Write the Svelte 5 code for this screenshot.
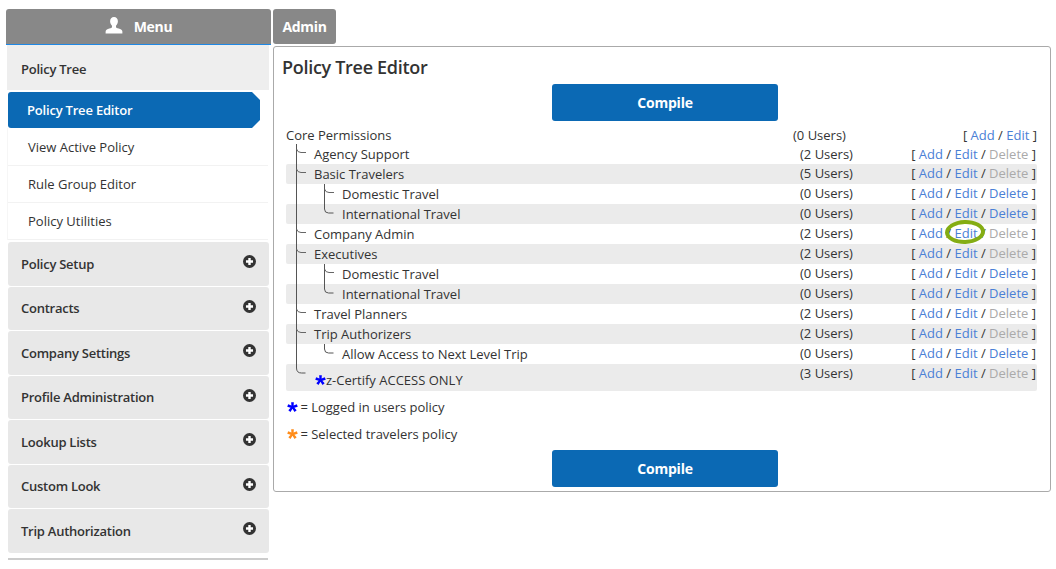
<script lang="ts">
	type Row = {
		name: string;
		users: number;
		depth: number;
		canDelete?: boolean;
		star?: boolean;
		tall?: boolean;
	};

	const subItems = ['View Active Policy', 'Rule Group Editor', 'Policy Utilities'];
	const sections = [
		'Policy Setup',
		'Contracts',
		'Company Settings',
		'Profile Administration',
		'Lookup Lists',
		'Custom Look',
		'Trip Authorization'
	];

	const rows: Row[] = [
		{ name: 'Agency Support', users: 2, depth: 1 },
		{ name: 'Basic Travelers', users: 5, depth: 1 },
		{ name: 'Domestic Travel', users: 0, depth: 2, canDelete: true },
		{ name: 'International Travel', users: 0, depth: 2, canDelete: true },
		{ name: 'Company Admin', users: 2, depth: 1 },
		{ name: 'Executives', users: 2, depth: 1 },
		{ name: 'Domestic Travel', users: 0, depth: 2, canDelete: true },
		{ name: 'International Travel', users: 0, depth: 2, canDelete: true },
		{ name: 'Travel Planners', users: 2, depth: 1 },
		{ name: 'Trip Authorizers', users: 2, depth: 1 },
		{ name: 'Allow Access to Next Level Trip', users: 0, depth: 2, canDelete: true },
		{ name: 'z-Certify ACCESS ONLY', users: 3, depth: 1, star: true, tall: true }
	];

	// y of each elbow in the tree, relative to the top of the tree
	const level1 = [28, 48, 108, 128, 188, 208];
	const level2 = [68, 148];
</script>

{#snippet star(color: string)}
	<svg class="star" width="11" height="11" viewBox="0 0 14 14" aria-hidden="true">
		<path
			d="M5.300 0.300h3.400l-.3 4.300 4.100-1.600 1.200 3.200-4.300 1 2.900 3.400-2.700 2L7 8.700l-2.600 3.900-2.700-2 2.900-3.400-4.300-1L1.500 3l4.100 1.600z"
			fill={color}
		/>
	</svg>
{/snippet}

<div class="page">
	<aside class="sidebar">
		<div class="menu-head">
			<svg width="18" height="17" viewBox="0 0 18 17" aria-hidden="true">
				<path
					d="M9 0c2.400 0 3.900 1.900 3.900 4.300 0 1.900-.8 3.400-1.900 4.400v1.200c0 .7 1.100 1.100 2.700 1.700 1.900.7 3.300 1.300 3.600 2.400.1.600.1 1.700.1 2.500H.6c0-.8 0-1.900.1-2.500.3-1.100 1.700-1.700 3.600-2.400C5.900 11 7 10.600 7 9.900V8.700C5.900 7.700 5.100 6.200 5.100 4.300 5.100 1.900 6.600 0 9 0z"
					fill="#fff"
				/>
			</svg>
			<span>Menu</span>
		</div>

		<div class="open-section">Policy Tree</div>
		<div class="active-item">Policy Tree Editor</div>
		<ul class="sub-list">
			{#each subItems as item}
				<li>{item}</li>
			{/each}
		</ul>

		{#each sections as section}
			<div class="section">
				<span>{section}</span>
				<svg width="13" height="13" viewBox="0 0 14 14" aria-hidden="true">
					<circle cx="7" cy="7" r="7" fill="#333" />
					<path d="M7 3.200v7.600M3.200 7h7.600" stroke="#fff" stroke-width="2.600" />
				</svg>
			</div>
		{/each}
		<div class="sidebar-end"></div>
	</aside>

	<main class="content">
		<div class="tab">Admin</div>
		<section class="panel">
			<h1>Policy Tree Editor</h1>
			<button class="compile top">Compile</button>

			<div class="tree">
				<svg class="tree-lines" width="60" height="260" viewBox="0 0 60 260" aria-hidden="true">
					<g fill="none" stroke="#555" stroke-width="1">
						<path d="M10.500 19V243q0 5 5 5h4" />
						{#each level1 as y}
							<path d="M10.500 {y - 4}q1 3.500 4.500 3.500h5" stroke="#666" />
						{/each}
						<path d="M38.500 59V84q0 4 4 4h5" />
						<path d="M38.500 139V164q0 4 4 4h5" />
						<path d="M38.500 219V224q0 4 4 4h5" />
						{#each level2 as y}
							<path d="M38.500 {y - 4}q1 3.500 4.500 3.500h5" stroke="#666" />
						{/each}
					</g>
				</svg>

				<div class="row root">
					<span class="name">Core Permissions</span>
					<span class="users">(0 Users)</span>
					<span class="actions">[ <b>Add</b> / <b>Edit</b> ]</span>
				</div>

				{#each rows as row}
					<div class="row depth-{row.depth}" class:tall={row.tall}>
						<span class="name">
							{#if row.star}{@render star('#0000ff')}{/if}{row.name}
						</span>
						<span class="users">({row.users} Users)</span>
						<span class="actions">
							[ <b>Add</b> / <b>Edit</b> / <b class:off={!row.canDelete}>Delete</b> ]
						</span>
					</div>
				{/each}

				<div class="highlight"></div>
			</div>

			<p class="legend">{@render star('#0000ff')} = Logged in users policy</p>
			<p class="legend">{@render star('#ff8c1a')} = Selected travelers policy</p>

			<button class="compile bottom">Compile</button>
		</section>
	</main>
</div>

<style>
	:global(body) {
		margin: 0;
		background: #fff;
	}

	.page {
		display: flex;
		align-items: flex-start;
		gap: 2px;
		width: 1056px;
		height: 569px;
		padding: 9px 5px 0 6px;
		box-sizing: border-box;
		overflow: hidden;
		font-family: 'Open Sans', sans-serif;
		font-size: 13px;
		color: #333;
	}

	.sidebar {
		flex: 0 0 265px;
	}

	.menu-head {
		display: flex;
		align-items: center;
		justify-content: center;
		gap: 11px;
		height: 35px;
		background: #888;
		border-bottom: 1px solid #1e88e5;
		border-radius: 3px 3px 0 0;
		color: #fff;
		font-size: 14px;
		font-weight: 700;
		letter-spacing: -0.3px;
	}

	.menu-head svg {
		margin-top: -3px;
	}

	.open-section {
		display: flex;
		align-items: center;
		height: 45px;
		margin: 0 2px 2px 1px;
		padding: 2px 0 0 14px;
		box-sizing: border-box;
		background: #eee;
		font-weight: 600;
		letter-spacing: -0.25px;
	}

	.active-item {
		display: flex;
		align-items: center;
		height: 36px;
		width: 252px;
		margin-left: 2px;
		padding-left: 19px;
		box-sizing: border-box;
		background: #0b69b4;
		border-radius: 3px 0 0 3px;
		clip-path: polygon(0 0, 244px 0, 100% 8px, 100% 28px, 244px 100%, 0 100%);
		color: #fff;
		font-weight: 600;
		letter-spacing: -0.2px;
	}

	.sub-list {
		list-style: none;
		margin: 0 3px 0 1px;
		padding: 1px 0 0;
		border-left: 1px solid #f6f6f6;
	}

	.sub-list li {
		display: flex;
		align-items: center;
		height: 36px;
		padding-left: 20px;
		border-bottom: 1px solid #f2f2f2;
	}

	.section {
		display: flex;
		align-items: center;
		justify-content: space-between;
		height: 43.500px;
		margin: 1px 2px 0 2px;
		padding: 0 13px 0 13px;
		background: #e8e8e8;
		border-radius: 3px;
		font-weight: 600;
		letter-spacing: -0.25px;
	}

	.section svg {
		margin-top: -4px;
	}

	.open-section + .active-item + .sub-list + .section {
		margin-top: 2px;
	}

	.sidebar-end {
		height: 2px;
		margin: 5px 3px 0 2px;
		background: #ccc;
	}

	.content {
		flex: 1;
		min-width: 0;
	}

	.tab {
		display: inline-flex;
		align-items: center;
		justify-content: center;
		width: 63px;
		height: 35px;
		background: #888;
		border-radius: 3px;
		color: #fff;
		font-size: 14px;
		font-weight: 700;
		letter-spacing: -0.3px;
		vertical-align: top;
	}

	.panel {
		height: 446px;
		margin-top: 2px;
		padding: 0 13px 0 8px;
		box-sizing: border-box;
		border: 1px solid #aaa;
		border-radius: 3px;
	}

	h1 {
		margin: 0;
		padding-top: 8px;
		font-size: 18px;
		font-weight: 600;
		line-height: 25px;
		letter-spacing: -0.3px;
	}

	.compile {
		display: block;
		width: 226px;
		height: 37px;
		margin: 0 0 0 270px;
		border: 0;
		border-radius: 3px;
		background: #0b69b4;
		color: #fff;
		font: 700 14px 'Open Sans', sans-serif;
		letter-spacing: -0.2px;
	}

	.compile.top {
		margin-top: 4px;
	}

	.compile.bottom {
		margin-top: 6px;
	}

	.tree {
		position: relative;
		margin: 4px 0 0 4px;
	}

	.tree-lines {
		position: absolute;
		left: 0;
		top: 0;
	}

	.row {
		display: grid;
		grid-template-columns: 1fr 64px 173px;
		align-items: center;
		height: 20px;
		border-radius: 2px;
	}

	.row.root {
		height: 19px;
	}

	.row:nth-child(even):not(.root) {
		background: #ebebeb;
	}

	/* counts and links sit a pixel above the names from the second row on */
	.row:not(.root):not(.tall):nth-child(n + 4) .users,
	.row:not(.root):not(.tall):nth-child(n + 4) .actions {
		margin-top: -2px;
	}

	.depth-1 .name {
		padding-left: 28px;
	}

	.depth-2 .name {
		padding-left: 56px;
	}

	.users {
		white-space: nowrap;
	}

	.root .users {
		margin-left: -7px;
	}

	.actions {
		text-align: right;
		padding-right: 1px;
		white-space: nowrap;
	}

	.root .actions {
		padding-right: 0;
	}

	.actions b {
		color: #4a80d6;
		font-weight: 400;
	}

	.actions b.off {
		color: #aaa;
	}

	.row.tall {
		height: 27px;
		align-items: start;
	}

	.row.tall .name {
		padding-top: 7px;
		display: flex;
		align-items: center;
		gap: 1px;
	}

	.star {
		flex: none;
		vertical-align: -1px;
		margin: 0 -1px 0 1px;
	}

	.highlight {
		position: absolute;
		left: 659px;
		top: 95px;
		width: 40px;
		height: 24px;
		border: 4px solid #84ad13;
		border-radius: 50%;
		box-sizing: border-box;
		transform: rotate(-2deg);
	}

	.legend {
		margin: 7px 0 0 4px;
		height: 19px;
		line-height: 19px;
	}

	.legend + .legend {
		margin-top: 8px;
	}
</style>
